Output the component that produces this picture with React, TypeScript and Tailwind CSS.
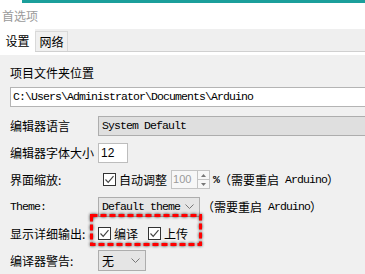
import type { ReactNode } from 'react'

const cjk = "font-['Noto_Sans_CJK_SC',sans-serif] text-[12px]"
const mono = "font-['Liberation_Mono',monospace] text-[11.5px] tracking-[-0.9px]"

function Check() {
  return (
    <span className="flex h-[13px] w-[13px] shrink-0 items-center justify-center border border-[#333] bg-white">
      <svg width="11" height="11" viewBox="0 0 11 11">
        <path d="M1.5 5.5 L4.2 8.3 L9.5 2.2" fill="none" stroke="#444" strokeWidth="1.2" />
      </svg>
    </span>
  )
}

function Chevron() {
  return (
    <svg width="9" height="5" viewBox="0 0 9 5" className="shrink-0">
      <path d="M0.5 0.5 L4.5 4.5 L8.5 0.5" fill="none" stroke="#777" strokeWidth="1" />
    </svg>
  )
}

function Row({ label, isMono = false, children }: { label: string; isMono?: boolean; children: ReactNode }) {
  return (
    <div className="flex h-[27px] items-center">
      <span className={`w-[88px] shrink-0 leading-[18px] text-black ${isMono ? mono : cjk}`}>{label}</span>
      {children}
    </div>
  )
}

function Restart() {
  return (
    <span className={`flex shrink-0 items-center whitespace-nowrap text-black ${cjk}`}>
      <span>（需要重启</span>
      <span className={`ml-[6px] ${mono}`}>Arduino</span>
      <span>）</span>
    </span>
  )
}

export default function App() {
  return (
    <div className="relative h-[274px] w-[365px] overflow-hidden bg-[#f0f0f0]">
      {/* window top edge */}
      <div className="flex h-[3px]">
        <div className="w-[22px] bg-white" />
        <div className="flex-1 bg-[#1b9f9b]" />
      </div>
      <div className="flex h-[26px] items-center bg-white pl-[2px]">
        <span className={`text-[#9a9a9a] ${cjk}`}>首选项</span>
      </div>

      {/* tabs */}
      <div className="flex h-[23px] items-end border-b border-[#d0d0d0] bg-[#efefef]">
        <div className={`-mb-px flex h-[23px] w-[35px] items-center justify-center bg-white text-black ${cjk}`}>
          设置
        </div>
        <div className={`flex h-[20px] w-[33px] items-center justify-center border border-b-0 border-[#d9d9d9] bg-[#f0f0f0] text-black ${cjk}`}>
          网络
        </div>
      </div>
      <div className="h-[3px] bg-white" />

      <div className="flex flex-col px-[10px] pt-[9px]">
        <span className={`leading-[18px] text-black ${cjk}`}>项目文件夹位置</span>
        <div className="mt-[5px] flex h-[20px] w-[400px] items-center border border-[#b4b4b4] bg-white px-[2px]">
          <span className={`text-black ${mono}`}>C:\Users\Administrator\Documents\Arduino</span>
        </div>

        <div className="mt-[5px] flex flex-col">
          <Row label="编辑器语言">
            <div className="flex h-[20px] w-[300px] shrink-0 items-center border border-[#adadad] bg-[#dfdfdf] px-[3px]">
              <span className={`text-black ${mono}`}>System Default</span>
            </div>
          </Row>
          <Row label="编辑器字体大小">
            <div className="flex h-[20px] w-[30px] items-center border border-[#bdbdbd] bg-white px-[2px]">
              <span className="font-['Liberation_Sans',sans-serif] text-[12px] text-black">12</span>
            </div>
          </Row>
          <Row label="界面缩放:">
            <span className="ml-[5px]">
              <Check />
            </span>
            <span className={`ml-[3px] shrink-0 text-black ${cjk}`}>自动调整</span>
            <div className="ml-[4px] flex h-[19px] w-[39px] shrink-0 items-stretch border border-[#c4c4c4] bg-[#f7f7f7]">
              <span className="flex w-[25px] items-center pl-[1px] font-['Liberation_Sans',sans-serif] text-[11px] text-[#9a9a9a]">100</span>
              <div className="flex w-[12px] flex-col border-l border-[#c4c4c4]">
                <div className="flex flex-1 items-center justify-center border-b border-[#c4c4c4]">
                  <svg width="5" height="3" viewBox="0 0 5 3"><path d="M0 3 L2.5 0 L5 3 Z" fill="#777" /></svg>
                </div>
                <div className="flex flex-1 items-center justify-center">
                  <svg width="5" height="3" viewBox="0 0 5 3"><path d="M0 0 L2.5 3 L5 0 Z" fill="#777" /></svg>
                </div>
              </div>
            </div>
            <span className={`ml-[3px] shrink-0 font-bold text-black ${mono}`}>%</span>
            <Restart />
          </Row>
          <Row label="Theme:" isMono>
            <div className="flex h-[20px] w-[102px] shrink-0 items-center justify-between border border-[#adadad] bg-[#e5e5e5] pl-[3px] pr-[5px]">
              <span className={`text-black ${mono}`}>Default theme</span>
              <Chevron />
            </div>
            <span className="ml-[2px]">
              <Restart />
            </span>
          </Row>
          <Row label="显示详细输出:">
            <Check />
            <span className={`ml-[3px] text-black ${cjk}`}>编译</span>
            <span className="ml-[10px]">
              <Check />
            </span>
            <span className={`ml-[3px] text-black ${cjk}`}>上传</span>
          </Row>
          <Row label="编译器警告:">
            <div className="flex h-[21px] w-[48px] items-center justify-between border border-[#adadad] bg-[#e5e5e5] pl-[3px] pr-[5px]">
              <span className={`text-black ${cjk}`}>无</span>
              <Chevron />
            </div>
          </Row>
        </div>
      </div>

      {/* red highlight annotation */}
      <svg
        className="pointer-events-none absolute left-[88px] top-[212px]"
        width="116"
        height="36"
        viewBox="0 0 116 36"
        style={{ filter: 'drop-shadow(0 0 1.5px rgba(0,0,0,0.8))' }}
      >
        <rect x="3.5" y="3.5" width="109" height="29" fill="none" stroke="#ff0000" strokeWidth="3" strokeDasharray="6 3" />
      </svg>
    </div>
  )
}
